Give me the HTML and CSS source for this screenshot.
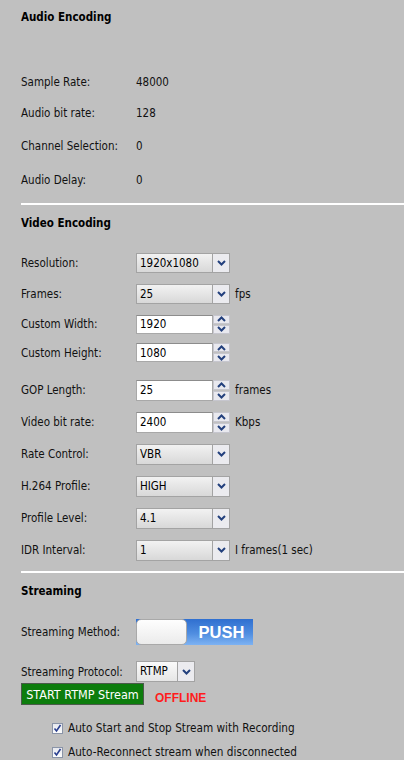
FILE: index.html
```html
<!DOCTYPE html>
<html>
<head>
<meta charset="utf-8">
<link rel="stylesheet" href="styles.css">
</head>
<body>
<div class="page">
  <section class="audio">
    <h2 class="heading">Audio Encoding</h2>
    <div class="audio-rows">
      <div class="row r30"><span class="label">Sample Rate:</span><span class="value">48000</span></div>
      <div class="row r32"><span class="label">Audio bit rate:</span><span class="value">128</span></div>
      <div class="row r34"><span class="label">Channel Selection:</span><span class="value">0</span></div>
      <div class="row r34"><span class="label">Audio Delay:</span><span class="value">0</span></div>
    </div>
  </section>
  <hr class="sep sep-audio">
  <section class="video">
    <h2 class="heading">Video Encoding</h2>
    <div class="video-rows">
      <div class="row r31">
        <span class="label">Resolution:</span>
        <div class="select w94"><span class="sel-text">1920x1080</span><span class="sel-btn"><svg width="9" height="6" viewBox="0 0 9 6"><polyline points="1,1 4.5,4.5 8,1" fill="none" stroke="#23407d" stroke-width="2"/></svg></span></div>
      </div>
      <div class="row r31">
        <span class="label">Frames:</span>
        <div class="select w94"><span class="sel-text">25</span><span class="sel-btn"><svg width="9" height="6" viewBox="0 0 9 6"><polyline points="1,1 4.5,4.5 8,1" fill="none" stroke="#23407d" stroke-width="2"/></svg></span></div>
        <span class="unit">fps</span>
      </div>
      <div class="row r30">
        <span class="label">Custom Width:</span>
        <div class="spin"><span class="spin-input">1920</span><span class="spin-btns"><span class="spin-b"><svg width="9" height="6" viewBox="0 0 9 6"><polyline points="1,5 4.5,1.5 8,5" fill="none" stroke="#23407d" stroke-width="2"/></svg></span><span class="spin-b"><svg width="9" height="6" viewBox="0 0 9 6"><polyline points="1,1 4.5,4.5 8,1" fill="none" stroke="#23407d" stroke-width="2"/></svg></span></span></div>
      </div>
      <div class="row r27">
        <span class="label">Custom Height:</span>
        <div class="spin"><span class="spin-input">1080</span><span class="spin-btns"><span class="spin-b"><svg width="9" height="6" viewBox="0 0 9 6"><polyline points="1,5 4.5,1.5 8,5" fill="none" stroke="#23407d" stroke-width="2"/></svg></span><span class="spin-b"><svg width="9" height="6" viewBox="0 0 9 6"><polyline points="1,1 4.5,4.5 8,1" fill="none" stroke="#23407d" stroke-width="2"/></svg></span></span></div>
      </div>
      <div class="row r32 gop">
        <span class="label">GOP Length:</span>
        <div class="spin tall"><span class="spin-input">25</span><span class="spin-btns"><span class="spin-b"><svg width="9" height="6" viewBox="0 0 9 6"><polyline points="1,5 4.5,1.5 8,5" fill="none" stroke="#23407d" stroke-width="2"/></svg></span><span class="spin-b"><svg width="9" height="6" viewBox="0 0 9 6"><polyline points="1,1 4.5,4.5 8,1" fill="none" stroke="#23407d" stroke-width="2"/></svg></span></span></div>
        <span class="unit">frames</span>
      </div>
      <div class="row r32">
        <span class="label">Video bit rate:</span>
        <div class="spin tall"><span class="spin-input">2400</span><span class="spin-btns"><span class="spin-b"><svg width="9" height="6" viewBox="0 0 9 6"><polyline points="1,5 4.5,1.5 8,5" fill="none" stroke="#23407d" stroke-width="2"/></svg></span><span class="spin-b"><svg width="9" height="6" viewBox="0 0 9 6"><polyline points="1,1 4.5,4.5 8,1" fill="none" stroke="#23407d" stroke-width="2"/></svg></span></span></div>
        <span class="unit">Kbps</span>
      </div>
      <div class="row r32">
        <span class="label">Rate Control:</span>
        <div class="select w94 tall"><span class="sel-text">VBR</span><span class="sel-btn"><svg width="9" height="6" viewBox="0 0 9 6"><polyline points="1,1 4.5,4.5 8,1" fill="none" stroke="#23407d" stroke-width="2"/></svg></span></div>
      </div>
      <div class="row r32">
        <span class="label">H.264 Profile:</span>
        <div class="select w94 tall"><span class="sel-text">HIGH</span><span class="sel-btn"><svg width="9" height="6" viewBox="0 0 9 6"><polyline points="1,1 4.5,4.5 8,1" fill="none" stroke="#23407d" stroke-width="2"/></svg></span></div>
      </div>
      <div class="row r32">
        <span class="label">Profile Level:</span>
        <div class="select w94 tall"><span class="sel-text">4.1</span><span class="sel-btn"><svg width="9" height="6" viewBox="0 0 9 6"><polyline points="1,1 4.5,4.5 8,1" fill="none" stroke="#23407d" stroke-width="2"/></svg></span></div>
      </div>
      <div class="row r32">
        <span class="label">IDR Interval:</span>
        <div class="select w94 tall"><span class="sel-text">1</span><span class="sel-btn"><svg width="9" height="6" viewBox="0 0 9 6"><polyline points="1,1 4.5,4.5 8,1" fill="none" stroke="#23407d" stroke-width="2"/></svg></span></div>
        <span class="unit">I frames(1 sec)</span>
      </div>
    </div>
  </section>
  <hr class="sep sep-video">
  <section class="streaming">
    <h2 class="heading">Streaming</h2>
    <div class="row method">
      <span class="label">Streaming Method:</span>
      <div class="toggle"><span class="knob"></span><span class="toggle-text">PUSH</span></div>
    </div>
    <div class="row protocol">
      <span class="label">Streaming Protocol:</span>
      <div class="select w59 light"><span class="sel-text">RTMP</span><span class="sel-btn"><svg width="9" height="6" viewBox="0 0 9 6"><polyline points="1,1 4.5,4.5 8,1" fill="none" stroke="#23407d" stroke-width="2"/></svg></span></div>
    </div>
    <div class="action">
      <span class="start-btn">START RTMP Stream</span>
      <span class="offline">OFFLINE</span>
    </div>
    <div class="checks">
      <label class="check"><span class="box"><svg width="9" height="9" viewBox="0 0 9 9"><polyline points="1.5,4.5 3.5,7 7.5,1" fill="none" stroke="#2a3f8f" stroke-width="1.6"/></svg></span>Auto Start and Stop Stream with Recording</label>
      <label class="check"><span class="box"><svg width="9" height="9" viewBox="0 0 9 9"><polyline points="1.5,4.5 3.5,7 7.5,1" fill="none" stroke="#2a3f8f" stroke-width="1.6"/></svg></span>Auto-Reconnect stream when disconnected</label>
    </div>
  </section>
</div>
</body>
</html>
```

FILE: styles.css
```css
html, body {
  margin: 0;
  padding: 0;
  background: #c0c0c0;
}
body {
  font-family: "DejaVu Sans Condensed", "DejaVu Sans", sans-serif;
  font-stretch: condensed;
  font-size: 11.5px;
  color: #111;
  width: 404px;
  height: 760px;
  overflow: hidden;
}
.page {
  padding: 7px 0 0 21px;
}
.heading {
  margin: 0;
  height: 20px;
  line-height: 20px;
  font-size: 11.5px;
  font-weight: bold;
  color: #000;
}
.audio-rows {
  margin-top: 40px;
}
.row {
  display: flex;
  align-items: center;
}
.r27 { height: 27px; }
.r30 { height: 30px; }
.r31 { height: 31px; }
.r32 { height: 32px; }
.r34 { height: 34px; }
.label {
  width: 115px;
  flex: none;
}
.sep {
  margin: 0;
  border: none;
  height: 2px;
  background: #fff;
}
.sep-audio { margin-top: 6px; }
.sep-video { margin-top: 5px; }
.video .heading,
.streaming .heading {
  margin-top: 8px;
}
.video-rows {
  margin-top: 14px;
}
.gop {
  margin-top: 8px;
}
.select {
  display: flex;
  height: 20px;
  border: 1px solid #a3a3a3;
  box-sizing: border-box;
  background: linear-gradient(#f2f2f2, #d8d8d8);
}
.select.tall { height: 21px; }
.w94 { width: 94px; }
.w59 { width: 59px; }
.sel-text {
  flex: 1;
  padding-left: 3px;
  line-height: 18px;
  color: #000;
}
.sel-btn {
  width: 16px;
  flex: none;
  border-left: 1px solid #a3a3a3;
  background: #ebebef;
  display: flex;
  align-items: center;
  justify-content: center;
}
.select.light {
  background: linear-gradient(#fafafa, #e6e6e6);
  height: 21px;
}
.unit {
  margin-left: 5px;
}
.spin {
  display: flex;
  height: 19px;
}
.spin.tall { height: 21px; }
.spin-input {
  width: 77px;
  box-sizing: border-box;
  border: 1px solid #a8a8a8;
  border-top-color: #8c8c8c;
  background: #fff;
  padding-left: 3px;
  display: flex;
  align-items: center;
  color: #000;
}
.spin-btns {
  width: 17px;
  display: flex;
  flex-direction: column;
  gap: 1px;
}
.spin-b {
  flex: 1;
  background: #e9e9ef;
  border: 1px solid #c6c6ce;
  display: flex;
  align-items: center;
  justify-content: center;
}
.method {
  height: 30px;
  margin-top: 16px;
}
.toggle {
  width: 117px;
  height: 26px;
  display: flex;
  background: linear-gradient(#2f6fd0, #4f8de0 55%, #7db2f2);
}
.knob {
  width: 51px;
  height: 26px;
  box-sizing: border-box;
  border: 1px solid #a9a9a9;
  border-radius: 5px;
  background: linear-gradient(#fefefe, #ebebeb);
}
.toggle-text {
  flex: 1;
  display: flex;
  align-items: center;
  justify-content: center;
  color: #fff;
  font-family: "Liberation Sans", Arial, sans-serif;
  font-stretch: normal;
  font-weight: bold;
  font-size: 16.5px;
  padding-left: 3px;
}
.protocol {
  height: 21px;
  margin-top: 14px;
}
.action {
  display: flex;
  align-items: flex-start;
  margin-top: 1px;
}
.start-btn {
  width: 123px;
  height: 22px;
  box-sizing: border-box;
  background: #0d7d0d;
  border: 1px solid #4a5a4a;
  color: #fff;
  font-size: 12.5px;
  display: flex;
  align-items: center;
  justify-content: center;
}
.offline {
  margin-left: 11px;
  margin-top: 8px;
  color: #ff1c1c;
  font-family: "Liberation Sans", Arial, sans-serif;
  font-stretch: normal;
  font-weight: bold;
  font-size: 12px;
}
.checks {
  margin-top: 11px;
  padding-left: 31px;
}
.check {
  display: flex;
  align-items: center;
  height: 24px;
  font-size: 11.7px;
}
.box {
  width: 11px;
  height: 11px;
  box-sizing: border-box;
  border: 1px solid #8a94a8;
  background: linear-gradient(#e6e8ee, #fdfdfd);
  margin-right: 5px;
  display: flex;
  align-items: center;
  justify-content: center;
}
```
